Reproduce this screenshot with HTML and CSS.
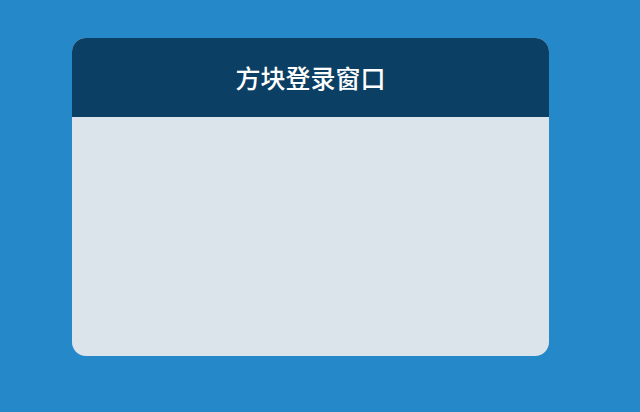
FILE: index.html
```html
<!DOCTYPE html>
<html lang="zh">
<head>
<meta charset="utf-8">
<link rel="stylesheet" href="styles.css">
</head>
<body>
<div class="box">
  <div class="head"><h1 class="title">方块登录窗口</h1></div>
  <div class="content"></div>
</div>
</body>
</html>
```
FILE: styles.css
```css
html, body {
  margin: 0;
  padding: 0;
  background: #2588c9;
  height: 100%;
}
body {
  padding: 38px 0 0 72px;
  box-sizing: border-box;
}
.box {
  width: 477px;
  height: 318px;
  border-radius: 14px;
  overflow: hidden;
  background: #dce4eb;
  display: flex;
  flex-direction: column;
}
.head {
  height: 79px;
  background: #0c3f64;
  display: flex;
  align-items: center;
  justify-content: center;
}
.title {
  margin: 0;
  color: #ffffff;
  font-family: "Noto Sans CJK SC", sans-serif;
  font-size: 25px;
  font-weight: 500;
  line-height: 1;
  padding-bottom: 1px;
}
.content {
  flex: 1;
}
```
